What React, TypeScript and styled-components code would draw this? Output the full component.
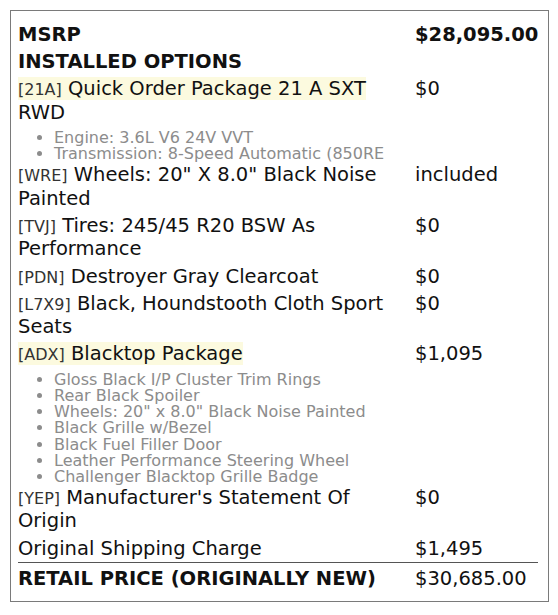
import React from "react";
import styled, { createGlobalStyle } from "styled-components";

const GlobalStyle = createGlobalStyle`
  html, body { margin: 0; padding: 0; background: #ffffff; }
  body {
    font-family: "DejaVu Sans", Verdana, sans-serif;
    color: #111111;
  }
`;

const Sheet = styled.div`
  box-sizing: border-box;
  width: 539px;
  margin: 10px 0 0 10px;
  border: 1px solid #7a7a7a;
  padding: 12px 10px 10px 7px;
  display: flex;
  flex-direction: column;
  gap: 3.8px;
  font-size: 19.5px;
  line-height: 23.4px;
`;

const Row = styled.div<{ $total?: boolean }>`
  display: grid;
  grid-template-columns: 393px 1fr;
  column-gap: 4px;
  ${(p) =>
    p.$total
      ? `
    margin-top: -1.5px;
    border-top: 1px solid #555555;
    padding-top: 4px;
  `
      : ""}
`;

const Heading = styled.div<{ $span?: boolean }>`
  font-weight: bold;
  ${(p) => (p.$span ? "grid-column: 1 / -1;" : "")}
`;

const Desc = styled.div<{ $highlight?: boolean }>`
  ${(p) =>
    p.$highlight
      ? `
    &::first-line { background: #fcfadf; }
  `
      : ""}
`;

const Code = styled.span`
  font-size: 16px;
  line-height: 16px;
  color: #333333;
`;

const Value = styled.div<{ $bold?: boolean }>`
  font-weight: ${(p) => (p.$bold ? "bold" : "normal")};
  white-space: nowrap;
`;

const SubList = styled.ul`
  margin: 6px 0 -3px 0;
  padding: 0 0 0 36px;
  list-style: disc;
  font-size: 16px;
  line-height: 16.2px;
  color: #8c8c8c;
  white-space: nowrap;
`;

const SubItem = styled.li``;

type Item = {
  code?: string;
  name: string;
  value: string;
  highlight?: boolean;
  sub?: string[];
};

const items: Item[] = [
  {
    code: "21A",
    name: "Quick Order Package 21 A SXT RWD",
    value: "$0",
    highlight: true,
    sub: ["Engine: 3.6L V6 24V VVT", "Transmission: 8-Speed Automatic (850RE"],
  },
  { code: "WRE", name: "Wheels: 20\" X 8.0\" Black Noise Painted", value: "included" },
  { code: "TVJ", name: "Tires: 245/45 R20 BSW As Performance", value: "$0" },
  { code: "PDN", name: "Destroyer Gray Clearcoat", value: "$0" },
  { code: "L7X9", name: "Black, Houndstooth Cloth Sport Seats", value: "$0" },
  {
    code: "ADX",
    name: "Blacktop Package",
    value: "$1,095",
    highlight: true,
    sub: [
      "Gloss Black I/P Cluster Trim Rings",
      "Rear Black Spoiler",
      "Wheels: 20\" x 8.0\" Black Noise Painted",
      "Black Grille w/Bezel",
      "Black Fuel Filler Door",
      "Leather Performance Steering Wheel",
      "Challenger Blacktop Grille Badge",
    ],
  },
  { code: "YEP", name: "Manufacturer's Statement Of Origin", value: "$0" },
  { name: "Original Shipping Charge", value: "$1,495" },
];

export default function App() {
  return (
    <>
      <GlobalStyle />
      <Sheet>
        <Row>
          <Heading>MSRP</Heading>
          <Value $bold>$28,095.00</Value>
        </Row>
        <Row>
          <Heading $span>INSTALLED OPTIONS</Heading>
        </Row>
        {items.map((it) => (
          <Row key={it.name}>
            <Desc $highlight={it.highlight}>
              {it.code && <Code>[{it.code}]</Code>}
              {it.code ? " " : ""}
              {it.name}
              {it.sub && (
                <SubList>
                  {it.sub.map((s) => (
                    <SubItem key={s}>{s}</SubItem>
                  ))}
                </SubList>
              )}
            </Desc>
            <Value>{it.value}</Value>
          </Row>
        ))}
        <Row $total>
          <Heading>RETAIL PRICE (ORIGINALLY NEW)</Heading>
          <Value>$30,685.00</Value>
        </Row>
      </Sheet>
    </>
  );
}
